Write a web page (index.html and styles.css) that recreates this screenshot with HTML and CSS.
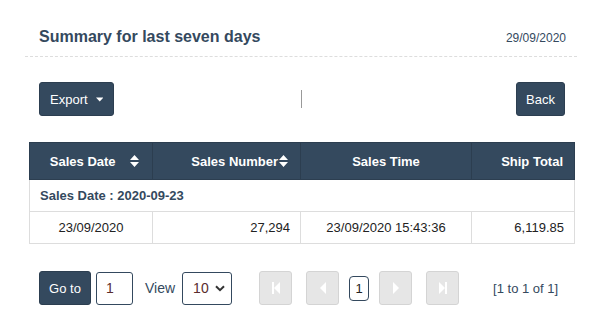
FILE: index.html
```html
<!DOCTYPE html>
<html>
<head>
<meta charset="utf-8">
<link rel="stylesheet" href="styles.css">
</head>
<body>
<div class="wrap">
  <div class="head">
    <h1 class="title">Summary for last seven days</h1>
    <span class="date">29/09/2020</span>
  </div>
  <div class="toolbar">
    <button class="btn export">Export <svg class="caret" width="9" height="5" viewBox="0 0 9 5"><path d="M0 0h9L4.5 5z" fill="#fff"/></svg></button>
    <span class="sep"></span>
    <button class="btn back">Back</button>
  </div>
  <table class="grid">
    <colgroup><col class="c1"><col class="c2"><col class="c3"><col class="c4"></colgroup>
    <thead>
      <tr>
        <th class="h1">Sales Date <svg class="sort" width="9" height="12" viewBox="0 0 9 12"><path d="M4.5 0L9 5H0z M0 7h9L4.5 12z" fill="#fff"/></svg></th>
        <th class="h2">Sales Number<svg class="sort" width="9" height="12" viewBox="0 0 9 12"><path d="M4.5 0L9 5H0z M0 7h9L4.5 12z" fill="#fff"/></svg></th>
        <th class="h3">Sales Time</th>
        <th class="h4">Ship Total</th>
      </tr>
    </thead>
    <tbody>
      <tr class="group"><td colspan="4">Sales Date : 2020-09-23</td></tr>
      <tr class="data">
        <td class="center">23/09/2020</td>
        <td class="right">27,294</td>
        <td class="center">23/09/2020 15:43:36</td>
        <td class="right">6,119.85</td>
      </tr>
    </tbody>
  </table>
  <div class="pager">
    <button class="btn goto">Go to</button>
    <div class="input">1</div>
    <span class="view">View</span>
    <div class="select">10 <svg width="10" height="7" viewBox="0 0 10 7"><path d="M1 1.2l4 4 4-4" stroke="#333" stroke-width="2" fill="none"/></svg></div>
    <div class="nav">
      <span class="pbtn first"><svg width="10" height="14" viewBox="0 0 10 14"><rect x="1" y="1" width="2" height="12" fill="#fff"/><path d="M9 1v12L3 7z" fill="#fff"/></svg></span>
      <span class="pbtn prev"><svg width="10" height="14" viewBox="0 0 10 14"><path d="M8 1v12L2 7z" fill="#fff"/></svg></span>
      <span class="pnum">1</span>
      <span class="pbtn next"><svg width="10" height="14" viewBox="0 0 10 14"><path d="M2 1v12L8 7z" fill="#fff"/></svg></span>
      <span class="pbtn last"><svg width="10" height="14" viewBox="0 0 10 14"><path d="M1 1v12L7 7z" fill="#fff"/><rect x="7" y="1" width="2" height="12" fill="#fff"/></svg></span>
    </div>
    <span class="count">[1 to 1 of 1]</span>
  </div>
</div>
</body>
</html>
```
FILE: styles.css
```css
* { box-sizing: border-box; }
html, body { margin: 0; padding: 0; background: #fff; }
body { font-family: "Liberation Sans", Arial, sans-serif; color: #34495e; }
.wrap { width: 602px; padding: 0 25px 0 25px; }
.head {
  display: flex; justify-content: space-between; align-items: center;
  height: 57px; padding: 17px 11px 0 14px;
  border-bottom: 1px dashed #ddd;
}
.title { margin: 0; font-size: 16px; font-weight: bold; color: #34495e; }
.date { font-size: 12px; color: #34495e; padding-top: 3px; }
.toolbar {
  display: flex; align-items: center; justify-content: space-between;
  margin-top: 25px; padding: 0 12px 0 14px; height: 34px;
}
.btn {
  background: #34495e; color: #fff; border: 1px solid #2c3e50; border-radius: 3px;
  font-family: "Liberation Sans", Arial, sans-serif; font-size: 13px;
  height: 34px; padding: 0 10px; display: inline-flex; align-items: center; cursor: pointer;
}
.export { width: 75px; padding-left: 10px; }
.caret { margin-left: 8px; }
.back { width: 49px; justify-content: center; padding: 0; }
.sep { width: 1px; height: 18px; background: #999; margin-right: 27px; }
.grid {
  margin: 26px 0 0 4px; width: 545px; border-collapse: collapse; table-layout: fixed;
  font-size: 13px;
}
.c1 { width: 123px; } .c2 { width: 148px; } .c3 { width: 171px; } .c4 { width: 103px; }
.grid th {
  background: #34495e; color: #fff; font-weight: bold; height: 37px;
  border: 1px solid #2c3e50; padding: 0 11px; white-space: nowrap;
}
.grid th .sort { vertical-align: -1px; }
.h1 { text-align: center; padding-left: 18px !important; }
.h1 .sort { margin-left: 11px; }
.h2 { text-align: right; padding-right: 12px !important; }
.h2 .sort { margin-left: 1px; }
.h3 { text-align: center; }
.h4 { text-align: right; }
.grid td { border: 1px solid #ddd; height: 32px; padding: 0 10px; }
.group td { font-weight: bold; color: #34495e; }
.data td { color: #222; }
.center { text-align: center; }
.right { text-align: right; }
.pager {
  display: flex; align-items: center; margin-top: 27px; padding-left: 14px; height: 34px;
}
.goto { width: 52px; justify-content: center; padding: 0; }
.input {
  width: 37px; height: 33px; margin-left: 5px; border: 1px solid #34495e; border-radius: 3px;
  font-size: 14px; color: #5a2d2d; padding: 7px 0 0 9px;
}
.view { margin-left: 12px; font-size: 14px; color: #34495e; }
.select {
  margin-left: 7px; width: 50px; height: 33px; border: 1px solid #34495e; border-radius: 3px;
  font-size: 14px; color: #5a2d2d; display: flex; align-items: center; justify-content: space-between;
  padding: 0 6px 0 10px;
}
.nav { display: flex; align-items: center; margin-left: 27px; }
.pbtn {
  width: 33px; height: 34px; background: #e6e6e6; border: 1px solid #d4d4d4; border-radius: 3px;
  display: flex; align-items: center; justify-content: center;
}
.first { margin-right: 14px; }
.pnum {
  margin: 0 10px 0 10px; width: 20px; height: 25px; border: 1px solid #34495e; border-radius: 4px;
  font-size: 13px; color: #222; display: flex; align-items: center; justify-content: center;
}
.next { margin-right: 14px; }
.count { margin-left: 34px; font-size: 13px; color: #34495e; }
```
